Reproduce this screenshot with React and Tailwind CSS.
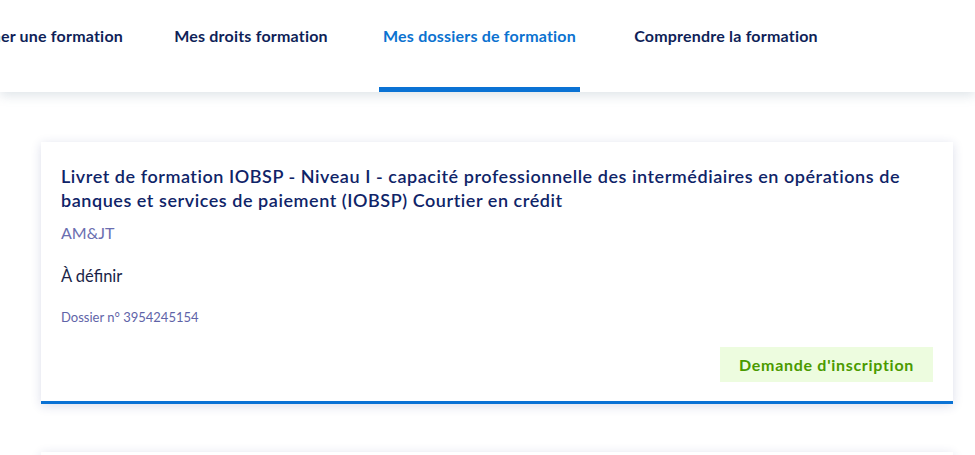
import React from 'react'

const tabs = [
  { label: 'Mes droits formation', width: 'w-[154px]' },
  { label: 'Mes dossiers de formation', width: 'w-[201px]', active: true },
  { label: 'Comprendre la formation', width: 'w-[190px]' },
]

function DossierCard() {
  return (
    <div className="bg-white shadow-[0_2px_10px_rgba(40,50,130,0.16)] border-b-[3px] border-[#0a72d4] px-5 pt-[22px] pb-[19px] flex flex-col">
      <h2 className="text-[18px] leading-6 font-semibold tracking-[0.55px] text-[#0f2468]">
        Livret de formation IOBSP - Niveau I - capacité professionnelle des intermédiaires en opérations de
        banques et services de paiement (IOBSP) Courtier en crédit
      </h2>
      <p className="mt-[9px] text-[16px] leading-6 text-[#6a6eb0]">AM&amp;JT</p>
      <p className="mt-[19px] text-[16.5px] leading-6 text-[#1a1f48]">À définir</p>
      <p className="mt-[19px] text-[13px] leading-5 text-[#5f64a8]">Dossier n° 3954245154</p>
      <span className="mt-5 self-end h-[35px] px-[19px] flex items-center bg-[#edfcdf] text-[#4a9a00] text-[16px] font-bold tracking-[0.7px]">
        Demande d'inscription
      </span>
    </div>
  )
}

export default function App() {
  return (
    <div className="min-h-screen bg-white overflow-hidden font-['Lato','Noto_Sans',sans-serif]">
      {/* Top navigation */}
      <header className="h-[92px] bg-white shadow-[0_4px_10px_rgba(120,140,160,0.22)] relative overflow-hidden">
        <nav className="flex h-full gap-[51px] text-[16px] font-bold whitespace-nowrap tracking-[0.2px]">
          <div className="w-[123px] shrink-0 flex justify-end">
            <a className="h-full pt-[24px] text-[#0f1f58]">Rechercher une formation</a>
          </div>
          {tabs.map((tab) => (
            <a
              key={tab.label}
              className={`${tab.width} shrink-0 h-full pt-[24px] flex justify-center border-b-[5px] ${
                tab.active ? 'border-[#0a72d4] text-[#0b72d0]' : 'border-transparent text-[#0f1f58]'
              }`}
            >
              {tab.label}
            </a>
          ))}
        </nav>
      </header>

      {/* Dossiers */}
      <main className="ml-[41px] w-[912px] mt-[50px] flex flex-col gap-[48px] pb-10">
        <DossierCard />
        <DossierCard />
      </main>
    </div>
  )
}
